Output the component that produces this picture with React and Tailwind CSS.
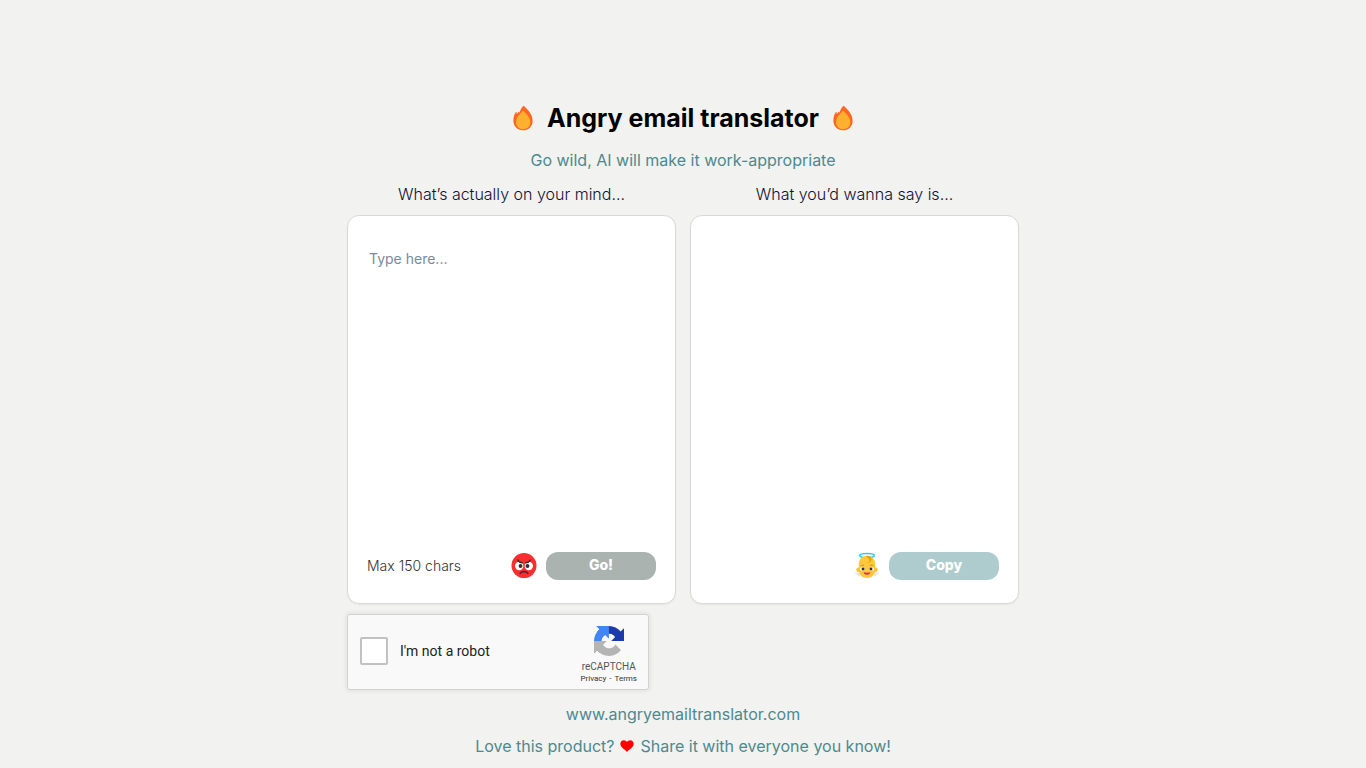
function Fire() {
  return (
    <svg viewBox="0 0 32 32" className="size-7" aria-hidden="true">
      <path
        fill="#FF6723"
        d="M27 19.300c0 6.200-4.600 10.800-11 10.800S5 25.500 5 18.900c0-3.800.9-7.300 2.700-9.600.3-.4.9-.2.9.3l.2 1.900 2-2.500c.3-.4.9-.2.9.3l.2.700c1-2.500 2.200-5.200 4.200-7.600.300-.3.700-.3 1 0C19.800 5 27 11 27 19.300Z"
      />
      <path
        fill="#FFB02E"
        d="M24.300 20.900c0 4.700-3.500 8-8.100 8S8 25.500 8 20.700c0-4.500 3.100-8.500 7.200-12.200.5-.5 1.300-.5 1.800 0 4.100 3.900 7.300 7.700 7.300 12.400Z"
      />
    </svg>
  );
}

function AngryFace() {
  return (
    <svg viewBox="0 0 32 32" className="size-7 shrink-0" aria-hidden="true">
      <circle cx="16" cy="15.500" r="14.300" fill="#F92F2F" />
      <circle cx="10.500" cy="16" r="4.800" fill="#fff" />
      <circle cx="21.500" cy="16" r="4.800" fill="#fff" />
      <circle cx="12" cy="16" r="2.200" fill="#402A32" />
      <circle cx="20" cy="16" r="2.200" fill="#402A32" />
      <path d="M4.500 7.500 14.800 13V7.500ZM27.500 7.500 17.200 13V7.500Z" fill="#F92F2F" />
      <path
        d="M8.800 9.200c1.200 2 2.800 3 5 3.100M23.200 9.200c-1.200 2-2.800 3-5 3.100M11.600 24.700c1.300-3.300 7.500-3.300 8.800 0"
        fill="none"
        stroke="#402A32"
        strokeWidth="1.600"
        strokeLinecap="round"
      />
    </svg>
  );
}

function BabyAngel() {
  return (
    <svg viewBox="0 0 32 32" className="size-7 shrink-0" aria-hidden="true">
      <path d="M2 23.500c2 .2 4 0 6-.5v5c-1.500-.2-2.500-1-3-2-1.500-.2-2.500-1.200-3-2.500ZM30 23.500c-2 .2-4 0-6-.5v5c1.500-.2 2.500-1 3-2 1.500-.2 2.500-1.200 3-2.500Z" fill="#E6E6E6" />
      <circle cx="6.300" cy="20.200" r="2.600" fill="#FFC02E" />
      <circle cx="25.700" cy="20.200" r="2.600" fill="#FFC02E" />
      <ellipse cx="16" cy="4" rx="8.300" ry="2.400" fill="none" stroke="#26C9FC" strokeWidth="1.700" />
      <path d="M16 4.200c-5.600 0-9.500 4.300-9.500 10v5.500C6.500 25.900 10.500 29.700 16 29.700s9.500-3.800 9.500-10v-5.500c0-5.700-3.900-10-9.500-10Z" fill="#FFC83D" />
      <path d="M15 4.300c4.300-.4 6.300 1.700 6.100 4.200-.2 2.200-2.100 3.500-4.600 3.800 1.900-1 2.700-2.200 2.300-3.400-.6-1.700-2.300-2.300-3.800-4.600Z" fill="#E39D15" />
      <ellipse cx="10.800" cy="19.300" rx="2.900" ry="1.800" fill="#fff" />
      <ellipse cx="21.200" cy="19.300" rx="2.900" ry="1.800" fill="#fff" />
      <circle cx="11.500" cy="19.300" r="1.700" fill="#402A32" />
      <circle cx="20.500" cy="19.300" r="1.700" fill="#402A32" />
      <path d="M9 15.700c1-.8 2.200-.9 3.200-.5M23 15.700c-1-.8-2.200-.9-3.200-.5" fill="none" stroke="#D67D00" strokeWidth="1" strokeLinecap="round" />
      <path d="M12.300 23.200c2.300.7 5.100.7 7.400 0 .2 1.900-1.500 2.800-3.700 2.800s-3.900-.9-3.700-2.800Z" fill="#D9304F" />
    </svg>
  );
}

function Heart() {
  return (
    <svg viewBox="0 0 16 14" className="h-3 w-3.5 shrink-0" aria-hidden="true">
      <path fill="#FF0000" d="M8 14C5.500 11.200.2 8.600.2 4.500.2 1.900 2 .2 4.300.2 5.900.2 7.300 1 8 2.400 8.700 1 10.100.2 11.700.2c2.300 0 4.100 1.700 4.100 4.300 0 4.100-5.300 6.700-7.800 9.500Z" />
    </svg>
  );
}

function RecaptchaLogo() {
  return (
    <svg viewBox="0 0 64 64" className="size-[30px]" aria-hidden="true">
      <path
        fill="#1c3aa9"
        d="M64 31.955l-.033-1.370V4.687l-7.160 7.160C50.948 4.674 42.033.093 32.050.093c-10.400 0-19.622 4.960-25.458 12.640l11.736 11.860a15.550 15.550 0 0 1 4.754-5.334c2.050-1.600 4.952-2.906 8.968-2.906.485 0 .860.057 1.135.163 4.976.393 9.288 3.140 11.828 7.124l-8.307 8.307L64 31.953"
      />
      <path
        fill="#4285f4"
        d="M31.862.094l-1.370.033H4.594l7.160 7.160C4.580 13.147 0 22.060 0 32.046c0 10.400 4.960 19.622 12.640 25.458L24.500 45.768a15.550 15.550 0 0 1-5.334-4.754c-1.600-2.050-2.906-4.952-2.906-8.968 0-.485.057-.860.163-1.135.393-4.976 3.140-9.288 7.124-11.828l8.307 8.307L31.860.095"
      />
      <path
        fill="#b4b4b4"
        d="M.001 32.045l.033 1.370v25.898l7.160-7.160c5.860 7.173 14.774 11.754 24.760 11.754 10.400 0 19.622-4.960 25.458-12.640l-11.736-11.860a15.550 15.550 0 0 1-4.754 5.334c-2.050 1.600-4.952 2.906-8.968 2.906-.485 0-.860-.057-1.135-.163-4.976-.393-9.288-3.140-11.828-7.124l8.307-8.307c-10.522.040-22.400.066-27.295-.005"
      />
    </svg>
  );
}

function Recaptcha() {
  return (
    <div className="mt-2.5 flex w-[302px] items-center justify-between rounded-[3px] border border-[#d3d3d3] bg-[#f9f9f9] pt-[11px] pr-[11px] pb-1 pl-3 font-[Roboto,sans-serif] font-normal shadow-[0_0_4px_1px_rgba(0,0,0,0.08)]">
      <div className="flex items-center gap-3 pb-2.5">
        <input
          id="robot"
          type="checkbox"
          className="size-7 appearance-none rounded-xs border-2 border-[#c1c1c1] bg-white"
        />
        <label htmlFor="robot" className="pt-px text-sm text-[#222222]">
          I'm not a robot
        </label>
      </div>
      <div className="flex flex-col items-center text-[#555555]">
        <RecaptchaLogo />
        <span className="mt-1 text-[10px] leading-[13px]">reCAPTCHA</span>
        <span className="flex gap-[3px] text-[8px] leading-3 text-[#333333]">
          <a href="#privacy">Privacy</a>
          <span>-</span>
          <a href="#terms">Terms</a>
        </span>
      </div>
    </div>
  );
}

const card =
  "mt-[9px] flex h-[389px] w-full flex-col rounded-xl border border-[#d9d9d9] bg-white px-[19px] pt-6 pb-[23px] shadow-xs";

export default function App() {
  return (
    <div className="min-h-screen bg-[#f2f2f0] px-4 font-[Inter,sans-serif] font-light">
      <main className="mx-auto flex max-w-2xl flex-col pt-[102px] pb-2">
        <h1 className="flex items-center justify-center gap-2.5 text-[25px] leading-8 font-bold text-black">
          <Fire />
          Angry email translator
          <Fire />
        </h1>
        <p className="mt-3.5 text-center leading-6 font-normal text-[#4d898f]">Go wild, AI will make it work-appropriate</p>

        <div className="mt-2.5 grid grid-cols-2 gap-3.5">
          <section className="flex flex-col items-center">
            <label htmlFor="message" className="leading-6 text-[#111133]">
              What’s actually on your mind...
            </label>
            <div className={card}>
              <textarea
                id="message"
                maxLength={150}
                placeholder="Type here..."
                className="w-full grow resize-none bg-transparent px-0.5 py-[9px] text-sm leading-5 font-normal outline-none placeholder:text-[#7c899c]"
              />
              <div className="flex items-center">
                <span className="grow text-sm text-[#333333]">Max 150 chars</span>
                <AngryFace />
                <button type="button" className="ml-2 h-7 w-[110px] rounded-xl bg-[#abb3b1] pb-0.5 text-sm font-extrabold text-white">
                  Go!
                </button>
              </div>
            </div>
          </section>

          <section className="flex flex-col items-center">
            <h2 className="leading-6 text-[#111133]">What you’d wanna say is...</h2>
            <div className={card}>
              <div className="grow" />
              <div className="flex items-center justify-end">
                <BabyAngel />
                <button type="button" className="ml-2 h-7 w-[110px] rounded-xl bg-[#aecccd] pb-0.5 text-sm font-extrabold text-white">
                  Copy
                </button>
              </div>
            </div>
          </section>
        </div>

        <Recaptcha />

        <footer className="mt-3 flex flex-col items-center gap-2 leading-6 font-normal text-[#4d898f]">
          <a href="#home">www.angryemailtranslator.com</a>
          <p className="flex items-center gap-1.5">
            Love this product?
            <Heart />
            Share it with everyone you know!
          </p>
        </footer>
      </main>
    </div>
  );
}
